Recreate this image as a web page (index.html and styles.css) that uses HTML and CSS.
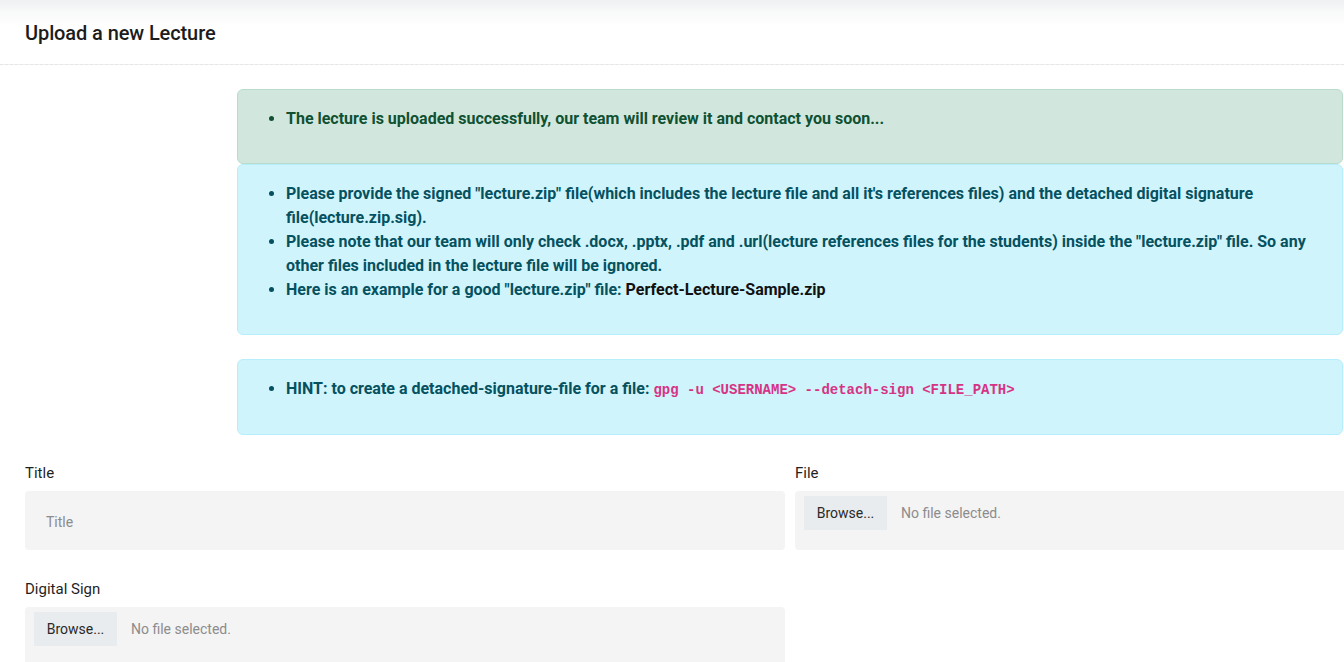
FILE: index.html
```html
<!DOCTYPE html>
<html lang="en">
<head>
<meta charset="utf-8">
<title>Upload a new Lecture</title>
<link rel="stylesheet" href="styles.css">
</head>
<body>
<header class="page-head">
  <h1 class="page-title">Upload a new Lecture</h1>
</header>
<main class="page-body">
  <section class="notices">
    <div class="alert alert-success">
      <ul class="alert-list">
        <li>The lecture is uploaded successfully, our team will review it and contact you soon...</li>
      </ul>
    </div>
    <div class="alert alert-info">
      <ul class="alert-list">
        <li>Please provide the signed "lecture.zip" file(which includes the lecture file and all it's references files) and the detached digital signature file(lecture.zip.sig).</li>
        <li>Please note that our team will only check .docx, .pptx, .pdf and .url(lecture references files for the students) inside the "lecture.zip" file. So any other files included in the lecture file will be ignored.</li>
        <li>Here is an example for a good "lecture.zip" file: <a class="sample-link" href="#">Perfect-Lecture-Sample.zip</a></li>
      </ul>
    </div>
    <div class="alert alert-info alert-hint">
      <ul class="alert-list">
        <li>HINT: to create a detached-signature-file for a file: <code class="cmd">gpg -u &lt;USERNAME&gt; --detach-sign &lt;FILE_PATH&gt;</code></li>
      </ul>
    </div>
  </section>
  <form class="upload-form">
    <div class="field">
      <label class="field-label">Title</label>
      <div class="field-box"><span class="placeholder">Title</span></div>
    </div>
    <div class="field">
      <label class="field-label">File</label>
      <div class="field-box file-box"><span class="browse">Browse...</span><span class="no-file">No file selected.</span></div>
    </div>
    <div class="field">
      <label class="field-label">Digital Sign</label>
      <div class="field-box file-box"><span class="browse">Browse...</span><span class="no-file">No file selected.</span></div>
    </div>
  </form>
</main>
</body>
</html>
```
FILE: styles.css
```css
html, body {
  margin: 0;
  padding: 0;
  overflow: hidden;
  background: #fff;
}
body {
  font-family: Roboto, "Liberation Sans", sans-serif;
  color: #212529;
  width: 1344px;
  height: 662px;
}
.page-head {
  border-bottom: 1px dashed #e6e6e6;
  background: linear-gradient(180deg, #eef0f1 0px, #f8f9f9 12px, #ffffff 26px);
  display: flex;
  align-items: center;
  padding: 0 25px;
  box-sizing: border-box;
  height: 65px;
}
.page-title {
  margin: 0;
  font-size: 20px;
  font-weight: 500;
  color: #1c1c1c;
  line-height: 1;
  padding-top: 1px;
  letter-spacing: -0.1px;
}
.page-body {
  padding-top: 24px;
}
.notices {
  margin: 0 1px 0 237px;
}
.alert {
  border: 1px solid transparent;
  border-radius: 6px;
  padding: 17px 16px 16px;
}
.alert-success {
  background: #d1e7dd;
  border-color: #badbcc;
  color: #0f5132;
}
.alert-info {
  background: #cff4fc;
  border-color: #b6effb;
  color: #055160;
}
.alert-hint {
  margin-top: 24px;
}
.alert-list {
  margin: 0 0 16px 0;
  padding-left: 32px;
  font-size: 16px;
  font-weight: 700;
  line-height: 24px;
}
.sample-link {
  color: #111;
  text-decoration: none;
}
.cmd {
  font-family: "Liberation Mono", monospace;
  font-size: 14px;
  color: #d63384;
  font-weight: 700;
}
.upload-form {
  display: grid;
  grid-template-columns: 760px 760px;
  column-gap: 10px;
  row-gap: 28px;
  padding: 27px 0 0 25px;
}
.field {
  display: flex;
  flex-direction: column;
}
.field-label {
  font-size: 15px;
  line-height: 22px;
  color: #1f1f1f;
  margin-bottom: 7px;
}
.field-box {
  height: 59px;
  background: #f4f4f4;
  border-radius: 4px;
  display: flex;
  align-items: center;
  box-sizing: border-box;
  padding: 2px 21px 0;
  font-size: 14px;
}
.placeholder {
  color: #8c8c8c;
}
.file-box {
  align-items: flex-start;
  padding: 5px 9px;
}
.browse {
  background: #e9ecef;
  color: #2a2a2a;
  height: 34px;
  width: 83px;
  display: flex;
  align-items: center;
  justify-content: center;
  font-size: 14px;
  margin-right: 14px;
}
.no-file {
  color: #8c8c8c;
  line-height: 34px;
}
```
